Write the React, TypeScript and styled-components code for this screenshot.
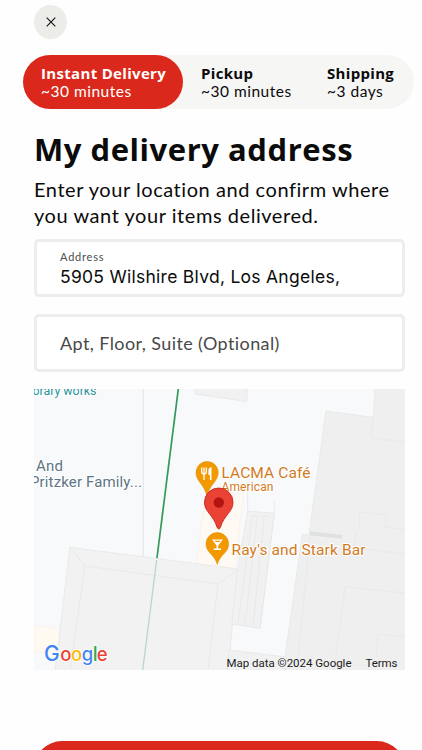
import React from "react";
import styled, { createGlobalStyle, css } from "styled-components";

const GlobalStyle = createGlobalStyle`
  * {
    box-sizing: border-box;
  }

  body {
    margin: 0;
    background: #fefefe;
    color: #0b0b0b;
    font-family: "Lato", "Open Sans", sans-serif;
  }

  button,
  input {
    font: inherit;
    color: inherit;
  }
`;

const options = [
  { title: "Instant Delivery", eta: "~30 minutes", width: 160 },
  { title: "Pickup", eta: "~30 minutes", width: 126 },
  { title: "Shipping", eta: "~3 days", width: 105 }
];

const Screen = styled.main`
  height: 750px;
  overflow: hidden;
  padding: 5px 17px 0 34px;
  display: flex;
  flex-direction: column;
`;

const CloseButton = styled.button`
  width: 33px;
  height: 34px;
  padding: 0;
  border: 0;
  border-radius: 50%;
  background: #ecede9;
  display: grid;
  place-items: center;
  flex: none;
`;

const Tabs = styled.div`
  display: flex;
  flex: none;
  width: 391px;
  height: 54px;
  margin: 16px 0 0 -11px;
  border-radius: 28px;
  background: #f6f6f5;
`;

const Tab = styled.button<{ $active: boolean; $width: number }>`
  width: ${(p) => p.$width}px;
  padding: 0 0 0 18px;
  border: 0;
  border-radius: 28px;
  background: transparent;
  display: flex;
  flex-direction: column;
  justify-content: center;
  text-align: left;
  white-space: nowrap;

  ${(p) =>
    p.$active &&
    css`
      background: #da291c;
      color: #fff;
    `}
`;

const TabTitle = styled.span`
  font-family: "Open Sans", sans-serif;
  font-size: 15px;
  line-height: 18px;
  font-weight: 700;
  letter-spacing: 0.32px;
`;

const TabEta = styled.span`
  font-size: 15.5px;
  line-height: 18px;
  letter-spacing: 0.5px;
`;

const Title = styled.h1`
  margin: 20px 0 0;
  font-family: "Open Sans", sans-serif;
  font-size: 31px;
  line-height: 40px;
  font-weight: 700;
  letter-spacing: 0.55px;
  white-space: nowrap;
`;

const Intro = styled.p`
  margin: 7px 0 0;
  font-size: 20px;
  line-height: 26px;
  letter-spacing: 0.55px;
  white-space: nowrap;
`;

const Field = styled.label<{ $gap: number; $offset?: number }>`
  display: flex;
  flex-direction: column;
  justify-content: center;
  flex: none;
  width: 371px;
  height: 58px;
  margin-top: ${(p) => p.$gap}px;
  padding: ${(p) => p.$offset ?? 0}px 23px 0;
  border: 3px solid #ededeb;
  border-radius: 5px;
  background: #fff;
`;

const FieldLabel = styled.span`
  font-size: 11px;
  line-height: 14px;
  letter-spacing: 0.8px;
  color: #4c4c4c;
`;

const Input = styled.input<{ $inter?: boolean }>`
  width: 100%;
  height: 24px;
  padding: 0;
  border: 0;
  outline: 0;
  background: transparent;
  font-size: 18px;
  letter-spacing: 0.4px;

  ${(p) =>
    p.$inter &&
    css`
      font-family: "Inter", sans-serif;
      font-size: 17.5px;
      letter-spacing: 0.27px;
    `}

  &::placeholder {
    color: #494949;
    opacity: 1;
  }
`;

const MapFrame = styled.div`
  flex: none;
  width: 371px;
  height: 281px;
  margin-top: 17px;
`;

const MapText = styled.text`
  font-family: "Roboto", sans-serif;
  paint-order: stroke;
  stroke: #fff;
  stroke-width: 2px;
  stroke-linejoin: round;
`;

const Attribution = styled.text`
  font-family: "Roboto", sans-serif;
  font-size: 11.5px;
  fill: #1c1c1c;
`;

const Logo = styled.text`
  font-family: "Inter", sans-serif;
  font-weight: 500;
  paint-order: stroke;
  stroke: #fff;
  stroke-width: 1.5px;
`;

const ConfirmButton = styled.button`
  flex: none;
  width: 371px;
  height: 56px;
  margin-top: 71px;
  border: 0;
  border-radius: 28px;
  background: #da291c;
`;

const logoLetters = [
  { char: "G", x: 10, size: 21, fill: "#4285f4" },
  { char: "o", x: 26.3, size: 18.5, fill: "#ea4335" },
  { char: "o", x: 37, size: 18.5, fill: "#fbbc05" },
  { char: "g", x: 47.8, size: 18.5, fill: "#4285f4" },
  { char: "l", x: 58.7, size: 19.5, fill: "#34a853" },
  { char: "e", x: 62.7, size: 18.5, fill: "#ea4335" }
];

function StreetMap() {
  return (
    <svg width="371" height="281" viewBox="0 0 371 281" display="block">
      <rect width="371" height="281" fill="#f8f9fb" />
      <path d="M109.3 0V160L108.5 281" stroke="#e7e9eb" strokeWidth="1.3" fill="none" />
      <path d="M144.3 0L122.7 171" stroke="#34995a" strokeWidth="1.7" />

      {/* terraces */}
      <path d="M171 110L209 104L201.5 180L162.5 175Z" fill="#fef9f3" stroke="#fbf0e5" strokeWidth=".8" />
      <path d="M0 237L31 240L27 264L0 263Z" fill="#fef9f1" stroke="#fbf3e8" strokeWidth=".8" />

      {/* buildings */}
      <g stroke="#e7e8e8" strokeWidth=".9" fill="#f1f1f1">
        <path d="M161 -1V5L212.5 12.5L213.5 -1Z" />
        <path d="M292 22L339.3 28.3L341 -1H372V282H249L268.3 145.3L275 146Z" fill="#efefef" />
        <path d="M36 158.3L203.7 180L194 282H21Z" fill="#f2f2f2" />
        <path d="M213.7 122L240.3 124.3L226 239.3L197.7 235L203.7 180Z" />
        <path d="M195 261L252 268L250 282H193Z" />
      </g>
      <g stroke="#e7e8e8" strokeWidth=".9" fill="none">
        <path d="M36 158.3L51 177L184 195L203.7 180M51 177L36 281M184 195L174 281" />
        <path d="M213.7 103V122M240.3 112V124.3L226 239.3M217 127H236M218 129L204 235M223 129L211 236M230 129L219 237" />
        <path d="M339.3 28.3L337 49L371 53M325 141L326 123L351.7 126V138L371 141" />
        <path d="M276 148L262.7 281M322.7 141L320 159L371 165M300 281L311 198L371 204M342 268L344 245L371 248" />
      </g>
      <path d="M276 142.5L308 146V149.5L276 146.5Z" fill="#dfe0e0" />
      <path d="M122.7 171L108.7 281" stroke="#bcd8c8" strokeWidth="1.4" />

      <MapText x="-1.5" y="5.5" fontSize="12.5" fill="#2b949b" textLength="64">orary works</MapText>
      <MapText x="2" y="82" fontSize="15" fill="#5d7583" textLength="27">And</MapText>
      <MapText x="-4" y="97.5" fontSize="15" fill="#5d7583" textLength="112">Pritzker Family...</MapText>
      <MapText x="187.5" y="89" fontSize="15.5" fill="#d27a1e" textLength="89">LACMA Café</MapText>
      <MapText x="187.5" y="102" fontSize="12" fill="#d27a1e" textLength="52">American</MapText>
      <MapText x="197.5" y="165.5" fontSize="15.5" fill="#d27a1e" textLength="134">Ray's and Stark Bar</MapText>

      {/* restaurant */}
      <path d="M173 72.5A11 11 0 0 1 184.2 84C184.2 92 176 95 173 107C170 95 162 92 162 84A11 11 0 0 1 173 72.5Z" fill="#f29900" stroke="#d98a06" strokeWidth=".5" />
      <path d="M167.7 78.5V82.5Q167.7 85 170 85Q172.3 85 172.3 82.5V78.5M170 78.5V91" fill="none" stroke="#fff" strokeWidth="1.3" />
      <path d="M177.5 78V91H175.9V86H174.4V81Q174.7 78.5 177.5 78Z" fill="#fff" />

      {/* bar */}
      <path d="M183.3 143.5A11.3 11.3 0 0 1 194.6 155C194.6 164 186 165 183.3 175.5C180.5 165 172 164 172 155A11.3 11.3 0 0 1 183.3 143.5Z" fill="#f29900" stroke="#d98a06" strokeWidth=".5" />
      <path d="M178 150.5H189L184.2 156.5V159.5H187V161H179.8V159.5H182.5V156.5ZM180.5 151.7L181.5 153H185.5L186.5 151.7Z" fill="#fff" fillRule="evenodd" />

      {/* delivery location */}
      <path d="M184.7 99A14.2 14.2 0 0 1 199 113.3C199 123 190 126 186.5 138Q184.8 142 183 138C179.5 126 170.5 123 170.5 113.3A14.2 14.2 0 0 1 184.7 99Z" fill="#ea4335" stroke="#c5221f" strokeWidth=".9" />
      <circle cx="184.8" cy="113.5" r="5.2" fill="#b31412" />

      <Logo y="272.3">
        {logoLetters.map((letter, index) => (
          <tspan key={index} x={letter.x} fontSize={letter.size} fill={letter.fill}>
            {letter.char}
          </tspan>
        ))}
      </Logo>
      <Attribution x="192.5" y="277.5" textLength="125">Map data ©2024 Google</Attribution>
      <Attribution x="331.5" y="277.5" textLength="32">Terms</Attribution>
    </svg>
  );
}

export default function App() {
  return (
    <>
      <GlobalStyle />
      <Screen>
        <CloseButton aria-label="Close">
          <svg width="10" height="10" viewBox="0 0 10 10" fill="none" stroke="#111" strokeWidth="1.1">
            <path d="M.7 .7L9.3 9.3M9.3 .7L.7 9.3" />
          </svg>
        </CloseButton>
        <Tabs>
          {options.map((option, index) => (
            <Tab key={option.title} $active={index === 0} $width={option.width}>
              <TabTitle>{option.title}</TabTitle>
              <TabEta>{option.eta}</TabEta>
            </Tab>
          ))}
        </Tabs>
        <Title>My delivery address</Title>
        <Intro>
          Enter your location and confirm where
          <br />
          you want your items delivered.
        </Intro>
        <Field $gap={11} $offset={2}>
          <FieldLabel>Address</FieldLabel>
          <Input $inter defaultValue="5905 Wilshire Blvd, Los Angeles," />
        </Field>
        <Field $gap={17}>
          <Input placeholder="Apt, Floor, Suite (Optional)" />
        </Field>
        <MapFrame>
          <StreetMap />
        </MapFrame>
        <ConfirmButton aria-label="Confirm address" />
      </Screen>
    </>
  );
}
